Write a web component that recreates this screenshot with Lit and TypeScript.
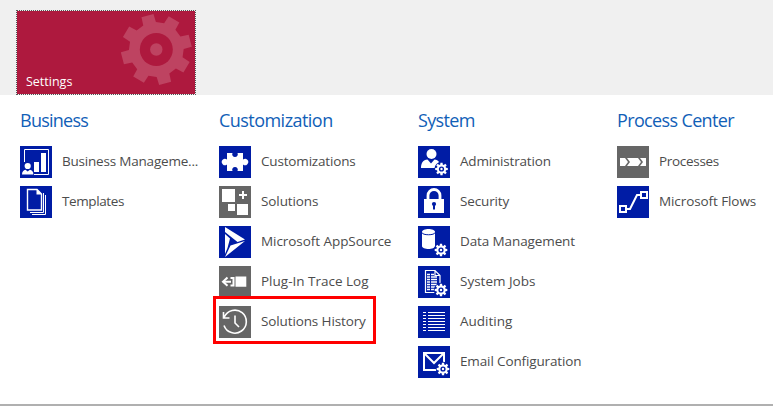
import { LitElement, html, css, svg, nothing } from "lit";
import { customElement, property } from "lit/decorators.js";

/** Outline of a cog with n tapered teeth. */
function cog(cx: number, cy: number, outer: number, inner: number, n: number, start: number, tip = 10, base = 13.8): string {
  const pts: string[] = [];
  const at = (r: number, deg: number) => {
    const a = (deg * Math.PI) / 180;
    pts.push(`${(cx + r * Math.cos(a)).toFixed(2)} ${(cy + r * Math.sin(a)).toFixed(2)}`);
  };
  for (let i = 0; i < n; i++) {
    const c = start + (360 / n) * i;
    at(inner, c - base);
    at(outer, c - tip);
    at(outer, c + tip);
    at(inner, c + base);
  }
  return `M${pts.join("L")}Z`;
}

const smallCog = (cx: number, cy: number) => svg`
  <circle cx=${cx} cy=${cy} r="7.2" fill="#001ca5"/>
  <path d=${cog(cx, cy, 6.4, 4.7, 8, -90, 10, 15)} fill="#fff"/>
  <circle cx=${cx} cy=${cy} r="2.6" fill="#001ca5"/>
  <circle cx=${cx} cy=${cy} r="1.2" fill="#fff"/>`;

const line = (d: string, w = 1) => svg`<path d=${d} fill="none" stroke="#fff" stroke-width=${w}/>`;
const fill = (d: string) => svg`<path d=${d} fill="#fff"/>`;

const glyphs: Record<string, unknown> = {
  chart: svg`${line("M4.500 16V3.500H28.500V28.500H14")}${fill("M14 16h5v10h-5zM21 7h5v19h-5z")}
    <circle cx="7.7" cy="20" r="3.1" fill="#fff"/>${fill("M2 28.500c0-3 1.500-4.300 3.500-4.700l2.200 1.700 2.200-1.700c2 .4 3.500 1.700 3.500 4.700z")}`,
  pages: svg`${line("M7.500 3.500h9.500l4.500 4.500v16h-14z", 1.400)}${fill("M16.500 3l5.500 5.500h-5.500z")}${line("M23.500 7v19.500H10M25.500 9v19.500H12")}`,
  puzzle: svg`${fill("M8 7h5.500a2.800 2.800 0 1 0 5 0H24v6.500a3.200 3.200 0 1 1 0 5V25h-5.500a2.800 2.800 0 1 0-5 0H8v-6.500a3.200 3.200 0 1 1 0-5z")}`,
  blocks: svg`${fill("M3 3h13v13H3zM9 18h7v7H9zM18 18h11v11H18zM23 5h2v3h3v2h-3v3h-2v-3h-3V8h3z")}`,
  source: svg`${fill("M6 1l20 12.500L18.500 16 6 6zM26 15L6 31l5.500-11.500zM6 8l5 4.500L8.500 22 6 28z")}`,
  plug: svg`${fill("M16.500 10.500h10.800v10.200H16.500zM11.500 11h4v9.500h-4v-2h2V13h-2zM5 14.700h7v2H5z")}${line("M8.500 11.500L4 15.700l4.500 4", 2)}`,
  history: svg`${line("M5.300 11A11.500 11.500 0 1 1 5 19.500M4.500 6v6h6M16 9.500V17l4 4", 1.600)}`,
  user: svg`<circle cx="13.500" cy="8" r="5" fill="#fff"/>${fill("M3 22c0-5 2-8 6.500-8.500l3.500 4 3.500-4c4 .5 6 3.500 6 8.500z")}${smallCog(23.500, 23)}`,
  lock: svg`<path d="M10 14V9.500a6 6 0 0 1 12 0V14" fill="none" stroke="#fff" stroke-width="2.800"/>${fill("M6 13h20v14H6z")}
    <circle cx="16" cy="18" r="2.100" fill="#001ca5"/><path d="M15 18h2v5.500h-2z" fill="#001ca5"/>`,
  data: svg`${fill("M4 6c0-4 13-4 13 0v14c0 4-13 4-13 0z")}<path d="M4 6.500c0 3 13 3 13 0" fill="none" stroke="#001ca5"/>${smallCog(23, 24)}`,
  jobs: svg`${line("M7.500 4.500h9.500l5 5v17h-14.500zM17 4.500v5h5", 1.200)}${line("M9 8.500h3M13 8.500h3M9 11h3M13 11h6M9 13.500h3M13 13.500h6M9 16h3M13 16h6M9 18.500h3M13 18.500h6M9 21h3M13 21h6M9 23.500h3M13 23.500h6", 1.300)}${smallCog(23, 24)}`,
  audit: svg`${line("M5 6.500h3M10 6.500h17M5 9.500h3M10 9.500h17M5 12.500h3M10 12.500h17M5 15.500h3M10 15.500h17M5 18.500h3M10 18.500h17M5 21.500h3M10 21.500h17M5 24.500h3M10 24.500h17")}`,
  mail: svg`${line("M6 7h20v17H6zM6 7l10 10L26 7", 2)}${smallCog(25, 23)}`,
  process: svg`${fill("M3 12h5l3 4-3 4H3zM10 12h11l3 4-3 4H10l3-4zM23 12h6v8h-6l3-4z")}`,
  flow: svg`${line("M3 20h6v6H3zM24 6h6v6h-6zM10 23h3L20 9h3", 2)}`,
};

@customElement("sitemap-item")
class SitemapItem extends LitElement {
  @property() label = "";
  @property() icon = "";
  @property({ type: Boolean }) gray = false;
  @property({ type: Boolean }) marked = false;
  @property({ type: Number }) spacing = 0;

  static styles = css`
    :host { display: block; }
    .row { position: relative; display: flex; align-items: center; gap: 10px; height: 32px; }
    .icon { flex: none; width: 32px; height: 32px; background: #001ca5; }
    .icon.gray { background: #666; }
    .label { color: #4c4c4c; font: 13.5px/20px "Open Sans", "Noto Sans", sans-serif; white-space: nowrap; margin-top: -2px; }
    .mark { position: absolute; left: -6px; top: -10px; width: 163px; height: 48px; box-sizing: border-box; border: 3px solid #f00; }
  `;

  render() {
    return html`<div class="row">
      <svg class="icon ${this.gray ? "gray" : ""}" viewBox="0 0 32 32">${glyphs[this.icon]}</svg>
      <span class="label" style="letter-spacing:${this.spacing}px">${this.label}</span>
      ${this.marked ? html`<div class="mark"></div>` : nothing}
    </div>`;
  }
}

interface Item { label: string; icon: string; gray?: boolean; marked?: boolean; spacing?: number }
interface Group { title: string; spacing: number; items: Item[] }

const groups: Group[] = [
  { title: "Business", spacing: -0.75, items: [
    { label: "Business Manageme...", icon: "chart", spacing: -0.2 },
    { label: "Templates", icon: "pages", spacing: -0.4 },
  ] },
  { title: "Customization", spacing: -0.54, items: [
    { label: "Customizations", icon: "puzzle", spacing: -0.17 },
    { label: "Solutions", icon: "blocks", gray: true, spacing: -0.1 },
    { label: "Microsoft AppSource", icon: "source", spacing: -0.06 },
    { label: "Plug-In Trace Log", icon: "plug", gray: true },
    { label: "Solutions History", icon: "history", gray: true, marked: true, spacing: -0.12 },
  ] },
  { title: "System", spacing: -0.67, items: [
    { label: "Administration", icon: "user", spacing: -0.18 },
    { label: "Security", icon: "lock", spacing: -0.14 },
    { label: "Data Management", icon: "data", spacing: -0.11 },
    { label: "System Jobs", icon: "jobs" },
    { label: "Auditing", icon: "audit" },
    { label: "Email Configuration", icon: "mail", spacing: -0.13 },
  ] },
  { title: "Process Center", spacing: -0.64, items: [
    { label: "Processes", icon: "process", gray: true, spacing: -0.3 },
    { label: "Microsoft Flows", icon: "flow", spacing: -0.09 },
  ] },
];

@customElement("app-root")
class AppRoot extends LitElement {
  static styles = css`
    :host { display: flex; flex-direction: column; box-sizing: border-box; height: 406px; background: #fff; border-bottom: 2px solid #b0b0b0; overflow: hidden; font-family: "Open Sans", "Noto Sans", sans-serif; }
    .band { flex: none; box-sizing: border-box; height: 95px; padding: 10px 0 0 16px; background: #f0f0f0; }
    .tile { box-sizing: border-box; width: 180px; height: 85px; border: 1px dotted #555; background: #ae193e; background-clip: padding-box; display: flex; justify-content: space-between; align-items: flex-end; }
    .name { color: #fff; font-size: 12.5px; line-height: 18px; padding: 0 0 3px 9px; }
    .gear { width: 74px; height: 83px; }
    .groups { display: grid; grid-template-columns: repeat(4, 199px); padding: 12px 0 0 20px; }
    .title { margin: 0 0 13px; font-size: 18px; line-height: 26px; font-weight: 400; color: #1160b7; white-space: nowrap; }
    .items { display: grid; gap: 8px; }
  `;

  render() {
    return html`
      <div class="band">
        <div class="tile">
          <span class="name">Settings</span>
          <svg class="gear" viewBox="121 11 74 83">
            <path d=${cog(156.3, 49.5, 35.6, 27.4, 8, -104.6)} fill="#be4361"/>
            <circle cx="156.3" cy="49.5" r="16.5" fill="#ae193e"/>
            <circle cx="156.3" cy="49.5" r="6.2" fill="#be4361"/>
          </svg>
        </div>
      </div>
      <div class="groups">
        ${groups.map((g) => html`<section>
          <h2 class="title" style="letter-spacing:${g.spacing}px">${g.title}</h2>
          <div class="items">
            ${g.items.map((i) => html`<sitemap-item .label=${i.label} .icon=${i.icon} .gray=${!!i.gray} .marked=${!!i.marked} .spacing=${i.spacing ?? 0}></sitemap-item>`)}
          </div>
        </section>`)}
      </div>`;
  }
}
